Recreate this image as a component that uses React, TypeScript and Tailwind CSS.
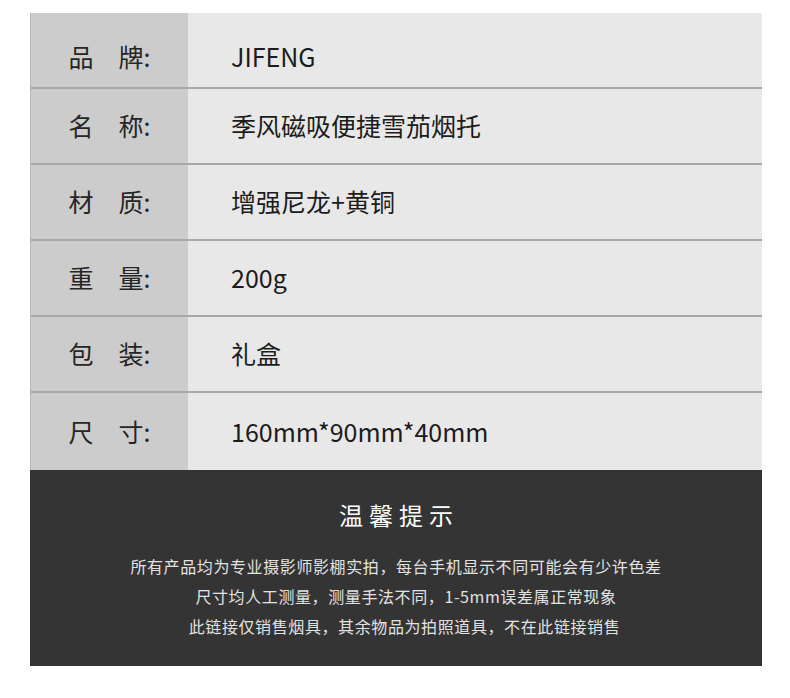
const specs = [
  { label: '品　牌', value: 'JIFENG' },
  { label: '名　称', value: '季风磁吸便捷雪茄烟托' },
  { label: '材　质', value: '增强尼龙+黄铜' },
  { label: '重　量', value: '200g' },
  { label: '包　装', value: '礼盒' },
  { label: '尺　寸', value: '160mm*90mm*40mm' },
];

const notes = [
  { text: '所有产品均为专业摄影师影棚实拍，每台手机显示不同可能会有少许色差', pad: 'pl-0' },
  { text: '尺寸均人工测量，测量手法不同，1-5mm误差属正常现象', pad: 'pl-[20px]' },
  { text: '此链接仅销售烟具，其余物品为拍照道具，不在此链接销售', pad: 'pl-[17px]' },
];

export default function App() {
  return (
    <div
      className="min-h-[698px] bg-white pt-[13px] px-[30px] w-[792px]"
      style={{ fontFamily: '"Noto Sans CJK SC", "Noto Sans", sans-serif' }}
    >
      <div className="border-l border-[#b8b8b8]">
        {specs.map((s, i) => (
          <div
            key={s.label}
            className={
              i < specs.length - 1
                ? 'flex h-[76px] border-b-2 border-[#a8a8a8]'
                : 'flex h-[77px]'
            }
          >
            <div
              className={
                i === 0
                  ? 'w-[157px] bg-[#cccccc] flex items-center justify-center pt-[14px] text-[25px] text-[#262626]'
                  : 'w-[157px] bg-[#cccccc] flex items-center justify-center text-[25px] text-[#262626]'
              }
            >
              {s.label}:
            </div>
            <div
              className={
                i === 0
                  ? 'flex-1 bg-[#e8e8e8] flex items-center pl-[43px] pt-[14px] text-[25px] text-[#1c1c1c]'
                  : 'flex-1 bg-[#e8e8e8] flex items-center pl-[43px] text-[25px] text-[#1c1c1c]'
              }
            >
              {s.value}
            </div>
          </div>
        ))}
      </div>

      <div className="bg-[#343434] h-[196px] pt-[30px] flex flex-col items-center">
        <div className="text-[24px] leading-[30px] tracking-[6px] pl-[6px] text-white">温馨提示</div>
        <div className="mt-[21px] flex flex-col items-center text-[16px] leading-[30px] tracking-[0.6px] text-[#e2e2e2]">
          {notes.map((n) => (
            <div key={n.text} className={n.pad}>
              {n.text}
            </div>
          ))}
        </div>
      </div>
    </div>
  );
}
